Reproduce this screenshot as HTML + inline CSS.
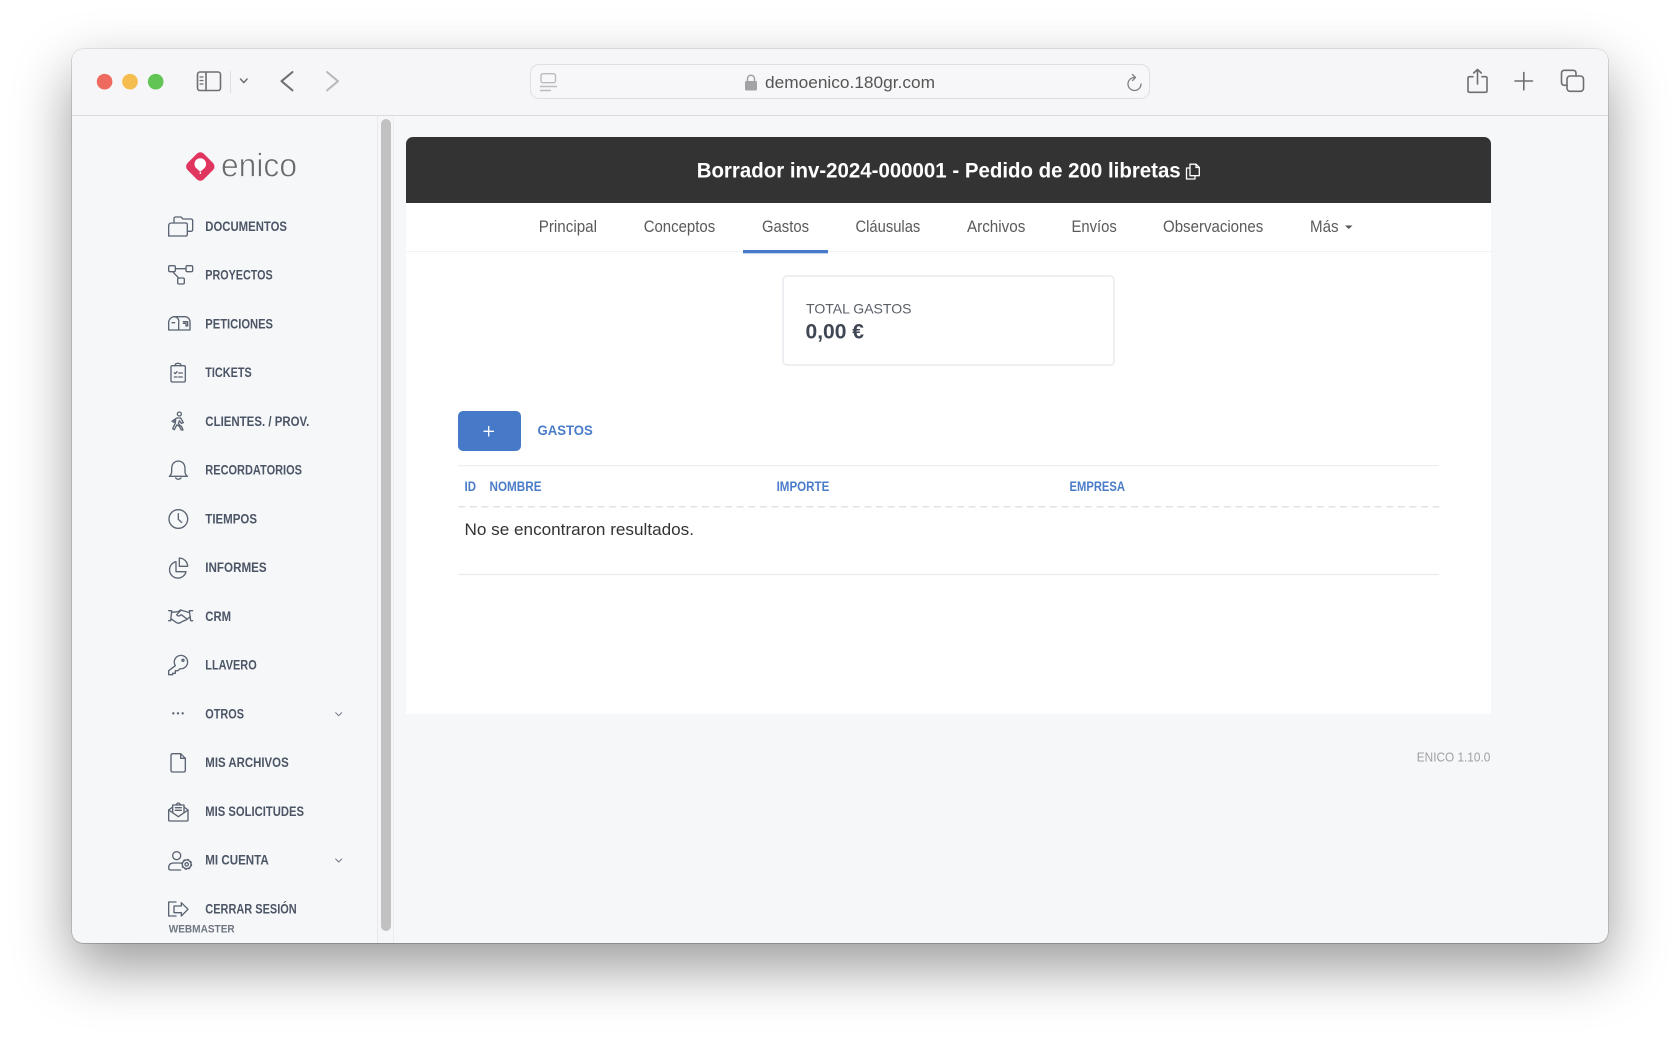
<!DOCTYPE html>
<html lang="es">
<head>
<meta charset="utf-8">
<title>Enico</title>
<style>
html,body{margin:0;padding:0;width:1680px;height:1037px;background:#fff;overflow:hidden}
.win{position:absolute;left:71.8px;top:48.5px;width:1536.7px;height:894.3px;background:#f6f7f9;border-radius:11px;box-shadow:0 24px 58px 0 rgba(0,0,0,.40),0 0 0 .5px rgba(0,0,0,.16),0 .5px 0 .5px rgba(0,0,0,.12)}
.tb{position:absolute;left:71.8px;top:48.5px;width:1536.7px;height:66.500px;background:#f6f6f8;border-bottom:1px solid #dcdcde;border-radius:11px 11px 0 0}
.track{position:absolute;left:377px;top:116px;width:17px;height:826.800px;background:#f5f6f8;border-left:1px solid #e9e9eb;border-right:1px solid #ececee;box-sizing:border-box}
.thumb{position:absolute;left:381px;top:119px;width:10px;height:812px;background:#c1c1c1;border-radius:5px}
.content{position:absolute;left:406px;top:203px;width:1085px;height:511px;background:#fff}
.head{position:absolute;left:406px;top:136.500px;width:1085px;height:66.500px;background:#333;border-radius:7px 7px 0 0}
.addr{position:absolute;left:530px;top:64px;width:620px;height:35px;box-sizing:border-box;border:1.5px solid #dfdfe2;border-radius:9px;background:#f7f7f9}
.card{position:absolute;left:782px;top:275px;width:333px;height:91px;box-sizing:border-box;border:2px solid #edeff3;border-radius:5px;background:#fff}
.btn{position:absolute;left:458.300px;top:411px;width:62.500px;height:40px;background:#4679c8;border-radius:5px}
svg{position:absolute;left:0;top:0}
text{font-family:"Liberation Sans",sans-serif}
.m{font-size:13.500px;font-weight:700;fill:#4b5565}
.n{font-size:16.500px;fill:#5a5a5a}
.h{font-size:13.500px;font-weight:700;fill:#4a7cc9}
.ic{fill:none;stroke:#5b6472;stroke-width:4;stroke-linecap:round;stroke-linejoin:round}
.t{fill:none;stroke:#6e6e70;stroke-width:1.6;stroke-linecap:round;stroke-linejoin:round}
</style>
</head>
<body>
<div class="win"></div>
<div class="tb"></div>
<div class="addr"></div>
<div class="track"></div>
<div class="thumb"></div>
<div class="content"></div>
<div class="head"></div>
<div class="card"></div>
<div class="btn"></div>
<svg width="1680" height="1037" viewBox="0 0 1680 1037" xmlns="http://www.w3.org/2000/svg">
  <!-- traffic lights -->
  <circle cx="104.6" cy="81.7" r="7.8" fill="#ee6a5f"/>
  <circle cx="130" cy="81.7" r="7.8" fill="#f5bd4f"/>
  <circle cx="155.7" cy="81.7" r="7.8" fill="#61c454"/>
  <!-- toolbar left -->
  <g class="t">
    <rect x="197.5" y="72" width="23" height="18.5" rx="2.5"/>
    <path d="M206 72v18.5"/>
    <path d="M200 77h3M200 80.5h3M200 84h3" stroke-width="1.2"/>
    <path d="M240.5 79l3.3 3.6 3.3-3.6" stroke-width="1.5"/>
    <path d="M292.500 72l-11 9.200 11 9.200" stroke-width="2"/>
    <path d="M327 72l11 9.200-11 9.200" stroke="#b8b8ba" stroke-width="2"/>
  </g>
  <path d="M230.500 71v22" stroke="#e0e0e2" stroke-width="1"/>
  <!-- address bar -->
  <g fill="none" stroke="#bcbcbe" stroke-width="1.4" stroke-linecap="round">
    <rect x="541" y="73.700" width="14.500" height="9" rx="2"/>
    <path d="M540.500 86.500h16M540.500 90.500h10"/>
  </g>
  <rect x="745" y="81" width="12" height="9.500" rx="1.500" fill="#a3a3a5"/>
  <path d="M747.500 81.500v-2.800a3.500 3.500 0 0 1 7 0v2.800" fill="none" stroke="#a3a3a5" stroke-width="1.500"/>
  <text x="765" y="88.200" font-size="17" fill="#555" textLength="170" lengthAdjust="spacingAndGlyphs">demoenico.180gr.com</text>
  <g fill="none" stroke="#808082" stroke-width="1.300" stroke-linecap="round" stroke-linejoin="round">
    <path d="M1134.500 77.500a6.500 6.500 0 1 0 6.500 6.500"/>
    <path d="M1132.500 74.500l3 3-3 3"/>
  </g>
  <!-- toolbar right -->
  <g class="t">
    <path d="M1473 76.700h-3.500q-1.500 0-1.500 1.500v12.600q0 1.500 1.500 1.500h16q1.500 0 1.500-1.500V78.200q0-1.500-1.500-1.500H1482"/>
    <path d="M1477.500 84V69.700M1473.700 73l3.800-3.500 3.800 3.500"/>
    <path d="M1515 81h17.500M1523.800 72.500v17.300"/>
    <rect x="1567" y="76" width="16.500" height="15.300" rx="3"/>
    <path d="M1567 85.300h-2.500q-3 0-3-3v-9q0-3 3-3h8.500q3 0 3 3V76"/>
  </g>
  <!-- logo -->
  <rect x="188.800" y="155" width="23" height="23" rx="5" fill="#e0355f" transform="rotate(45 200.300 166.500)"/>
  <circle cx="200.300" cy="164" r="5.800" fill="#fff"/>
  <path d="M197 168.700l3.300 3 3.300-3zM199.700 171h1.200v3h-1.200z" fill="#fff"/>
  <text x="221" y="176.300" font-size="33" fill="#6a6a6a" stroke="#f6f7f9" stroke-width=".7" textLength="76" lengthAdjust="spacingAndGlyphs">enico</text>
  <!-- menu -->
  <text class="m" x="205.300" y="230.900" textLength="81.700" lengthAdjust="spacingAndGlyphs">DOCUMENTOS</text>
  <text class="m" x="205.300" y="279.600" textLength="67.400" lengthAdjust="spacingAndGlyphs">PROYECTOS</text>
  <text class="m" x="205.300" y="328.400" textLength="67.700" lengthAdjust="spacingAndGlyphs">PETICIONES</text>
  <text class="m" x="205.300" y="377.100" textLength="46.400" lengthAdjust="spacingAndGlyphs">TICKETS</text>
  <text class="m" x="205.300" y="425.900" textLength="104" lengthAdjust="spacingAndGlyphs">CLIENTES. / PROV.</text>
  <text class="m" x="205.300" y="474.600" textLength="96.700" lengthAdjust="spacingAndGlyphs">RECORDATORIOS</text>
  <text class="m" x="205.300" y="523.400" textLength="51.700" lengthAdjust="spacingAndGlyphs">TIEMPOS</text>
  <text class="m" x="205.300" y="572.100" textLength="61.400" lengthAdjust="spacingAndGlyphs">INFORMES</text>
  <text class="m" x="205.300" y="620.900" textLength="25.700" lengthAdjust="spacingAndGlyphs">CRM</text>
  <text class="m" x="205.300" y="669.600" textLength="51.400" lengthAdjust="spacingAndGlyphs">LLAVERO</text>
  <text class="m" x="205.300" y="718.400" textLength="38.700" lengthAdjust="spacingAndGlyphs">OTROS</text>
  <text class="m" x="205.300" y="767.100" textLength="83.400" lengthAdjust="spacingAndGlyphs">MIS ARCHIVOS</text>
  <text class="m" x="205.300" y="815.900" textLength="98.700" lengthAdjust="spacingAndGlyphs">MIS SOLICITUDES</text>
  <text class="m" x="205.300" y="864.600" textLength="63.400" lengthAdjust="spacingAndGlyphs">MI CUENTA</text>
  <text class="m" x="205.300" y="913.400" textLength="91.400" lengthAdjust="spacingAndGlyphs">CERRAR SESIÓN</text>
  <text x="168.700" y="932.400" font-size="11" font-weight="700" fill="#6f7682" textLength="66" lengthAdjust="spacingAndGlyphs">WEBMASTER</text>
  <!-- icons group 1 -->
  <g class="ic" transform="translate(150 200) scale(.33333)">
    <path d="M72 66V56q0-5 5-5h16l6 6h24q5 0 5 5v27q0 5-5 5h-11"/>
    <path d="M56 108V78q0-9 8-9h8"/>
    <path d="M72 69h35q5 0 5 5v29q0 5-5 5H56"/>
    <rect x="56" y="197" width="20" height="18" rx="4"/>
    <rect x="108" y="197" width="20" height="18" rx="4"/>
    <rect x="83" y="234" width="20" height="18" rx="4"/>
    <path d="M76 206h32M68 215l18 19"/>
    <path d="M56 390V368a18 18 0 0 1 18-18h30a16 16 0 0 1 16 18v22z"/>
    <path d="M74 350a14 14 0 0 1 12 18v22M66 368h8M100 365h13v13h-5v-8h-8"/>
    <rect x="63" y="497" width="43" height="49" rx="4"/>
    <path d="M75 497q0-7 9-7t9 7M73 518l3 3 5-6M86 519h11M73 531h8M86 531h11"/>
    <circle cx="88" cy="642" r="6"/>
    <path d="M80 654h12l8 14-6 2-6-8-3 10 10 8 4 10h-5l-6-11-8-4-7 14-5-3 8-17 1-10-5 8-6-3z"/>
  </g>
  <!-- icons group 2 -->
  <g class="ic" transform="translate(150 450) scale(.33333)">
    <path d="M85 33q-20 2-20 24v8q0 8-7 14h54q-7-6-7-14v-8q0-22-20-24"/>
    <path d="M77 84q8 8 16 0"/>
    <circle cx="85" cy="207" r="28"/>
    <path d="M85 191v17l10 9"/>
    <path d="M80 335a25 25 0 1 0 30 30H80z" transform="translate(-2 0)"/>
    <path d="M88 324a26 26 0 0 1 25 25H88z"/>
    <path d="M56 482h9l-3 30h-6M128 482h-10l4 30h6"/>
    <path d="M65 487l19-2 8-5 26 8M63 506l15 11q9 6 18-2l14-6 11-9"/>
    <path d="M92 482L80 494q5 8 14 0l17 13"/>
    <path d="M76 647a20 20 0 1 1 14 9l-6 6h-8v8h-8v4H56v-12z"/>
    <circle cx="99" cy="631" r="3"/>
  </g>
  <!-- icons group 3 -->
  <g class="ic" transform="translate(150 690) scale(.33333)">
    <circle cx="70" cy="70" r="1.500" fill="#5b6472"/>
    <circle cx="84" cy="70" r="1.500" fill="#5b6472"/>
    <circle cx="98" cy="70" r="1.500" fill="#5b6472"/>
    <path d="M557 68l9 9 9-9" stroke-width="3" stroke="#6e7684"/>
    <path d="M63 241V196q0-5 5-5h24l14 14v36q0 5-5 5H68q-5 0-5-5z"/>
    <path d="M92 191v14h14"/>
    <path d="M56 360v30q0 3 3 3h52q3 0 3-3v-30l-29 20z"/>
    <path d="M56 360l12-9v-6h34v6l12 9M78 345q7-12 14 0M68 351v17M102 351v17M76 353h18M76 361h18"/>
    <circle cx="80" cy="497" r="12"/>
    <path d="M92 540H62q-6 0-6-6 0-15 15-15h18q5 0 7 2"/>
    <circle cx="110" cy="523" r="5"/>
    <circle cx="110" cy="523" r="13"/>
    <circle cx="110" cy="523" r="15" stroke-width="3" stroke-dasharray="5 7"/>
    <path d="M557 507l9 9 9-9" stroke-width="3" stroke="#6e7684"/>
    <path d="M78 636H56v42h22"/>
    <path d="M72 648h22v-10l20 20-20 20v-10H72z"/>
  </g>
  <!-- title -->
  <text x="696.700" y="177.500" font-size="21" font-weight="700" fill="#fff" textLength="484" lengthAdjust="spacingAndGlyphs">Borrador inv-2024-000001 - Pedido de 200 libretas</text>
  <g fill="none" stroke="#fff" stroke-width="1.300" stroke-linejoin="round">
    <path d="M1190 164.200h6l3.300 3.300v8.200H1190z"/>
    <path d="M1196 164.200v3.300h3.300"/>
    <path d="M1190 168h-3.500v11h8.500v-3.300"/>
  </g>
  <!-- tabs -->
  <path d="M406 251.500h1085" stroke="#f1f2f4" stroke-width="1"/>
  <text class="n" x="538.700" y="231.800" textLength="58.300" lengthAdjust="spacingAndGlyphs">Principal</text>
  <text class="n" x="643.700" y="231.800" textLength="71.500" lengthAdjust="spacingAndGlyphs">Conceptos</text>
  <text class="n" x="762" y="231.800" textLength="47" lengthAdjust="spacingAndGlyphs">Gastos</text>
  <text class="n" x="855.500" y="231.800" textLength="64.800" lengthAdjust="spacingAndGlyphs">Cláusulas</text>
  <text class="n" x="967" y="231.800" textLength="58.300" lengthAdjust="spacingAndGlyphs">Archivos</text>
  <text class="n" x="1071.500" y="231.800" textLength="45.300" lengthAdjust="spacingAndGlyphs">Envíos</text>
  <text class="n" x="1163" y="231.800" textLength="100.300" lengthAdjust="spacingAndGlyphs">Observaciones</text>
  <text class="n" x="1310" y="231.800" textLength="28.500" lengthAdjust="spacingAndGlyphs">Más</text>
  <path d="M1345 225.500h7.500l-3.750 3.500z" fill="#555"/>
  <rect x="743" y="250" width="85" height="3.300" fill="#4679c8"/>
  <!-- card -->
  <text x="806" y="313.300" font-size="14" fill="#5a5f68" textLength="105.500" lengthAdjust="spacingAndGlyphs">TOTAL GASTOS</text>
  <text x="805.500" y="338.500" font-size="21" font-weight="700" fill="#3f4654" textLength="58.500" lengthAdjust="spacingAndGlyphs">0,00 €</text>
  <!-- button row -->
  <path d="M483.500 431.300h10.500M488.700 426v10.500" stroke="#fff" stroke-width="1.300"/>
  <text class="h" x="537.500" y="435" textLength="55.300" lengthAdjust="spacingAndGlyphs">GASTOS</text>
  <!-- table -->
  <path d="M458.300 465.700h980.700" stroke="#e9ebef" stroke-width="1.200"/>
  <text class="h" x="464.500" y="491" textLength="11.500" lengthAdjust="spacingAndGlyphs">ID</text>
  <text class="h" x="489.500" y="491" textLength="52" lengthAdjust="spacingAndGlyphs">NOMBRE</text>
  <text class="h" x="776.600" y="491" textLength="52.700" lengthAdjust="spacingAndGlyphs">IMPORTE</text>
  <text class="h" x="1069.500" y="491" textLength="55.500" lengthAdjust="spacingAndGlyphs">EMPRESA</text>
  <path d="M458.300 506.700h980.700" stroke="#dfe3e8" stroke-width="1.500" stroke-dasharray="7 4.600"/>
  <text x="464.500" y="534.800" font-size="16.500" fill="#333" textLength="229.500" lengthAdjust="spacingAndGlyphs">No se encontraron resultados.</text>
  <path d="M458.300 574.500h980.700" stroke="#e9ebef" stroke-width="1.200"/>
  <!-- footer -->
  <text x="1416.800" y="761.500" font-size="12.800" fill="#a0a0a2" textLength="73.500" lengthAdjust="spacingAndGlyphs">ENICO 1.10.0</text>
</svg>
</body>
</html>
